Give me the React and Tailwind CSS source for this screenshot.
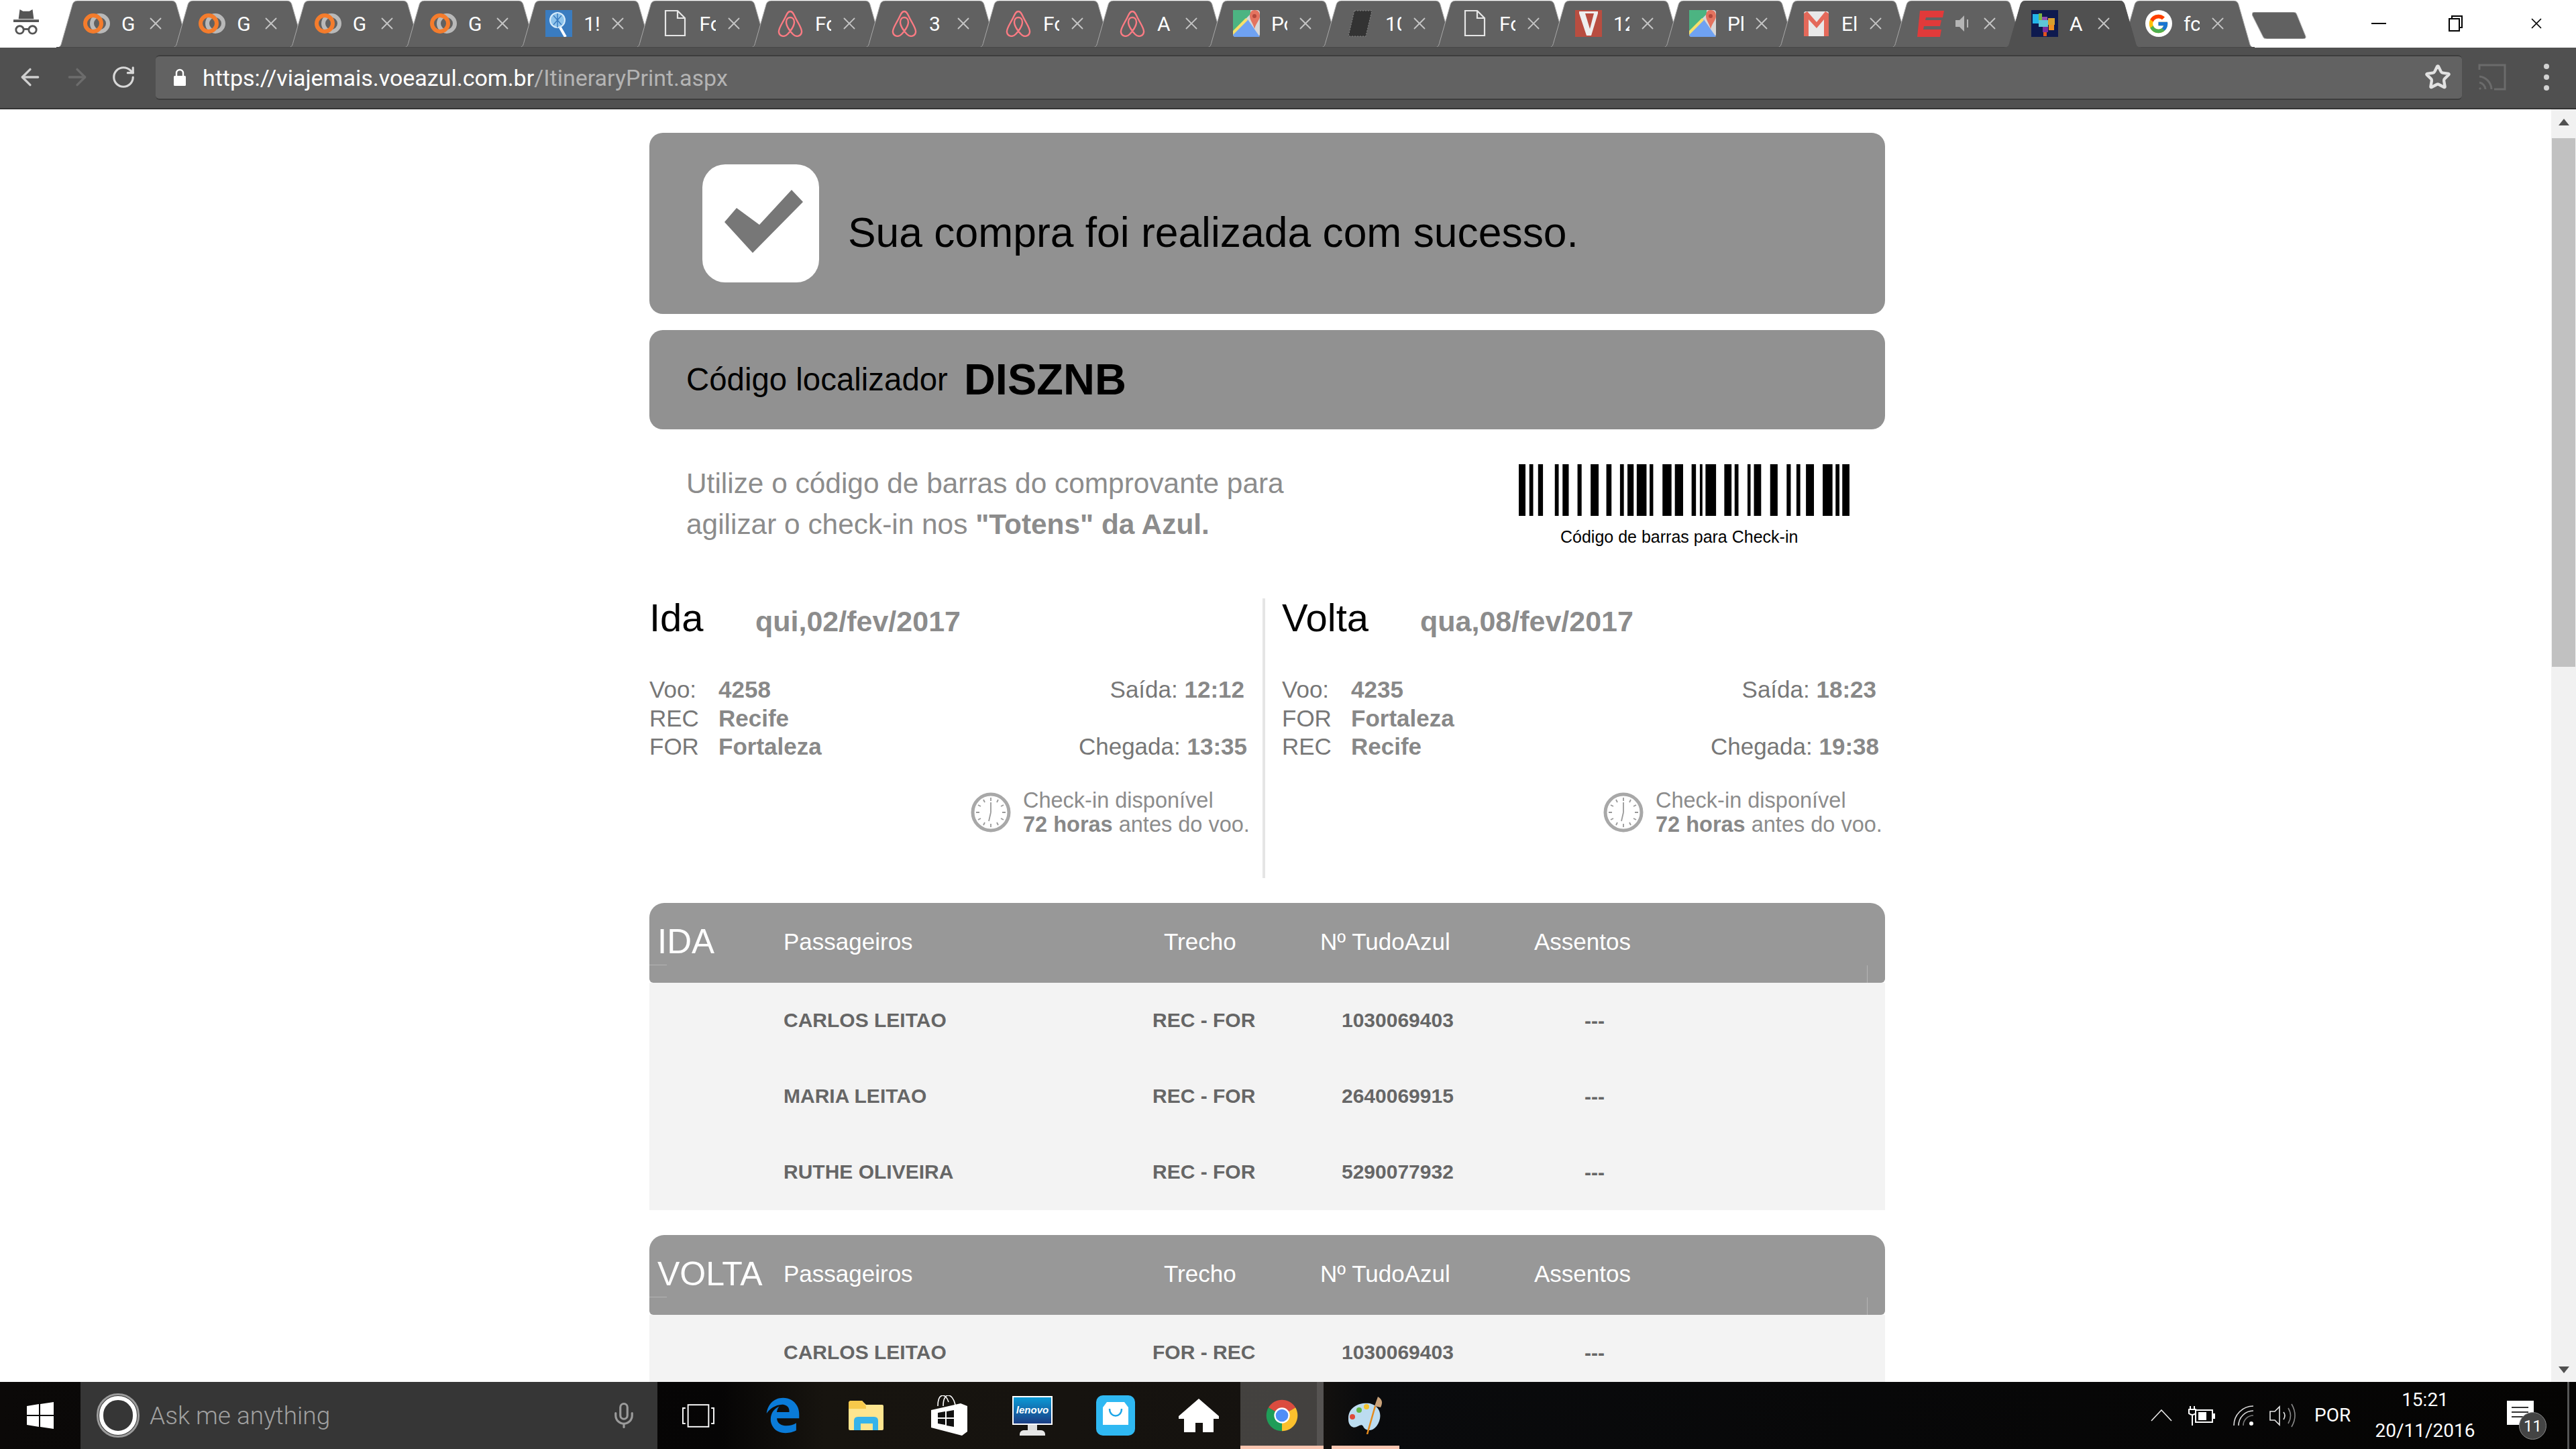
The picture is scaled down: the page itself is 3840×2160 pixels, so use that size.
import { ArrowLeft, ArrowRight, RotateCw, Star, X, Mic } from 'lucide-react';
import { FcGoogle } from 'react-icons/fc';
import { FaEdgeLegacy } from 'react-icons/fa6';

const BARS = [
  [92, 118], [133, 148], [167, 186], [232, 247], [262, 286], [320, 336], [371, 402], [432, 452], [485, 500], [514, 538],
  [550, 588], [600, 614], [650, 685], [698, 730], [763, 780], [795, 805], [817, 858], [890, 918], [930, 945], [980, 992],
  [1005, 1033], [1068, 1097], [1132, 1148], [1170, 1185], [1207, 1238], [1272, 1310], [1322, 1337], [1348, 1376],
];

const TABS = [
  { icon: 'rings', title: 'G' },
  { icon: 'rings', title: 'G' },
  { icon: 'rings', title: 'G' },
  { icon: 'rings', title: 'G' },
  { icon: 'search', title: '1!' },
  { icon: 'doc', title: 'Fo' },
  { icon: 'airbnb', title: 'Fo' },
  { icon: 'airbnb', title: '3' },
  { icon: 'airbnb', title: 'Fo' },
  { icon: 'airbnb', title: 'A' },
  { icon: 'maps', title: 'Po' },
  { icon: 'slash', title: '10' },
  { icon: 'doc', title: 'Fo' },
  { icon: 'vogue', title: '12' },
  { icon: 'maps', title: 'Pl' },
  { icon: 'gmail', title: 'El' },
  { icon: 'espn', title: '', sound: true },
  { icon: 'brazil', title: 'A', active: true },
  { icon: 'google', title: 'fc' },
];

function Favicon({ kind }) {
  if (kind === 'google') {
    return (
      <div className="w-[40px] h-[40px] rounded-full bg-white flex items-center justify-center">
        <FcGoogle size={33} />
      </div>
    );
  }
  const shapes = {
    rings: (
      <>
        <circle cx="25" cy="20" r="12" fill="none" stroke="#b9b9b9" strokeWidth="6" />
        <circle cx="15" cy="20" r="12" fill="none" stroke="#f47c2c" strokeWidth="6" />
      </>
    ),
    search: (
      <>
        <rect width="40" height="40" fill="#3a7cc0" />
        <circle cx="18" cy="15" r="11" fill="#8fc4ec" stroke="#d8ecfa" strokeWidth="2" />
        <path d="M12 8 L24 22 M24 8 L12 22 M18 5 L18 26" stroke="#3a7cc0" strokeWidth="1.5" />
        <path d="M22 26 L30 40" stroke="#fff" strokeWidth="4" />
      </>
    ),
    doc: <path d="M6 1 H24 L35 12 V38 H6 Z M24 1 V12 H35" fill="none" stroke="#e6e6e6" strokeWidth="2.2" />,
    airbnb: (
      <path
        d="M20 2 C24 2 25 6 28 12 C32 20 38 28 37 33 C36 39 29 41 24 36 C20 32 14 24 14 18 C14 13 17 11 20 11 C23 11 26 13 26 18 C26 24 20 32 16 36 C11 41 4 39 3 33 C2 28 8 20 12 12 C15 6 16 2 20 2 Z"
        fill="none"
        stroke="#fb7b83"
        strokeWidth="2.4"
      />
    ),
    maps: (
      <>
        <rect width="40" height="40" rx="4" fill="#d8d8d8" />
        <path d="M0 0 H26 V6 L0 32 Z" fill="#4cb482" />
        <path d="M0 32 L22 14 L40 40 H4 Q0 40 0 36 Z" fill="#6fa2f2" />
        <path d="M0 31 L19 12 L22 15 L0 37 Z" fill="#f7e06a" />
        <path d="M32 0 C38 0 40 4 40 9 C40 15 34 20 32 28 C30 20 25 15 25 9 C25 4 27 0 32 0 Z" fill="#e4735f" />
        <circle cx="32" cy="9" r="3" fill="#b3483c" />
      </>
    ),
    slash: <path d="M11 1 H37 L28 39 H2 Z" fill="#333" stroke="#888" strokeDasharray="2 2" />,
    vogue: (
      <>
        <rect width="40" height="40" fill="#b94d40" />
        <path d="M6 2 H34 V5 L24 38 H17 L6 5 Z" fill="#eee" />
        <path d="M15 5 L22 28 L28 5 Z" fill="#b94d40" />
      </>
    ),
    gmail: (
      <>
        <rect x="1" y="2" width="37" height="37" rx="3" fill="#e8e8e8" />
        <path d="M1 5 L6 2 L20 18 L33 2 L38 5 V39 H31 V14 L20 27 L8 14 V39 H1 Z" fill="#e4695a" />
      </>
    ),
    espn: <path d="M4 1 H40 L38 11 H13 L12 15 H36 L34 24 H10 L9 29 H36 L34 40 H0 Z" fill="#e13a3a" />,
    brazil: (
      <>
        <rect width="40" height="40" fill="#0e1a4f" />
        <rect x="2" y="6" width="9" height="14" fill="#23b5e8" />
        <rect x="11" y="5" width="5" height="10" fill="#7bb842" />
        <rect x="16" y="10" width="8" height="8" fill="#8e4fb0" />
        <rect x="25" y="12" width="10" height="10" fill="#d8a02e" />
        <rect x="11" y="15" width="14" height="10" fill="#5fc6d6" />
        <rect x="26" y="22" width="8" height="8" fill="#f09020" />
        <rect x="17" y="25" width="8" height="8" fill="#7a2c9c" />
        <rect x="18" y="33" width="5" height="6" fill="#e2521e" />
      </>
    ),
  };
  return (
    <svg viewBox="0 0 40 40" className="w-[40px] h-[40px]">
      {shapes[kind]}
    </svg>
  );
}

function Tab({ tab, index }) {
  // the first seven tabs sit a little wider apart than the rest
  const overlap = index === 0 ? '' : index < 7 ? '-ml-[30.7px]' : '-ml-[33px]';
  return (
    <div className={`relative h-[70px] w-[203px] shrink-0 flex items-center pl-[40px] ${overlap} ${tab.active ? 'z-10' : ''}`}>
      <svg viewBox="0 0 203 70" className="absolute inset-0 w-full h-full">
        <path d="M0 70 C6 70 7 66 8 62 L24 6 C25 2 28 0 33 0 H171 C175 0 178 2 179 6 L195 62 C196 66 197 70 203 70 Z" fill={tab.active ? '#505050' : '#616161'} stroke={tab.active ? '#505050' : '#a9a9a9'} strokeWidth="1" />
        {!tab.active && <path d="M0 69.5 H203" stroke="#474747" strokeWidth="1" />}
      </svg>
      <div className="relative flex items-center h-full pb-[2px]">
        <Favicon kind={tab.icon} />
        <div className="ml-[17px] w-[24px] overflow-hidden whitespace-nowrap text-[30px] text-white font-['Roboto',sans-serif]">
          {tab.sound ? (
            <svg viewBox="0 0 24 30" className="w-[24px] h-[30px]">
              <path d="M0 10 H6 L13 3 V27 L6 20 H0 Z" fill="#b5b5b5" />
              <path d="M18 9 V21" stroke="#b5b5b5" strokeWidth="2" />
            </svg>
          ) : (
            tab.title
          )}
        </div>
        <X className="ml-[12px] text-[#c4c4c4]" size={30} strokeWidth={1.5} />
      </div>
    </div>
  );
}

function TabStrip() {
  return (
    <div className="h-[71px] pt-[1px] bg-white flex items-start shrink-0">
      <div className="w-[84px] shrink-0 pl-[20px] pt-[12px]">
        <svg viewBox="0 0 40 42" className="w-[38px] h-[40px]">
          <path d="M8 16 L10 1 L15 4 H25 L30 1 L32 16 Z" fill="#555" />
          <rect x="0" y="17" width="40" height="4" fill="#555" />
          <circle cx="10" cy="33" r="6" fill="none" stroke="#555" strokeWidth="3" />
          <circle cx="30" cy="33" r="6" fill="none" stroke="#555" strokeWidth="3" />
          <path d="M16 32 H24" stroke="#555" strokeWidth="3" />
        </svg>
      </div>
      {TABS.map((tab, i) => (
        <Tab key={i} tab={tab} index={i} />
      ))}
      <div className="-ml-[4px] mt-[17px] w-[84px] h-[40px] shrink-0">
        <svg viewBox="0 0 84 40" className="w-full h-full">
          <path d="M3 0 H62 Q66 0 67 4 L80 36 Q81 40 76 40 H22 Q17 40 16 36 L0 4 Q0 0 3 0 Z" fill="#616161" stroke="#bbb" strokeWidth="1" />
        </svg>
      </div>
      <div className="flex-1 flex items-center justify-end h-[68px] text-black">
        <div className="w-[22px] h-[2px] bg-black mr-[93px]" />
        <svg viewBox="0 0 22 24" className="w-[22px] h-[24px] mr-[96px]">
          <path d="M5 5 V1 H20 V18 H16" fill="none" stroke="#000" strokeWidth="2" />
          <rect x="1" y="5" width="15" height="18" fill="none" stroke="#000" strokeWidth="2" />
        </svg>
        <X className="mr-[46px]" size={26} strokeWidth={1.6} />
      </div>
    </div>
  );
}

function Toolbar() {
  return (
    <div className="h-[92px] bg-[#505050] border-b-[2px] border-[#333] flex items-center shrink-0 pb-[2px]">
      <div className="w-[232px] shrink-0 flex items-center pl-[25px]">
        <ArrowLeft className="text-[#d0d0d0]" size={40} strokeWidth={2} />
        <ArrowRight className="text-[#6c6c6c] ml-[30px]" size={40} strokeWidth={2} />
        <RotateCw className="text-[#d8d8d8] ml-[30px]" size={38} strokeWidth={2} />
      </div>
      <div className="w-[3438px] h-[67px] bg-[#626262] border-y-[2px] border-[#3d3d3d] rounded-[6px] flex items-center shrink-0">
        <svg viewBox="0 0 20 26" className="w-[20px] h-[26px] ml-[26px]">
          <path d="M5 11 V7 a5 5 0 0 1 10 0 V11" fill="none" stroke="#fff" strokeWidth="2.4" />
          <rect x="1" y="11" width="18" height="15" rx="1.5" fill="#fff" />
        </svg>
        <div className="ml-[24px] pt-[3px] text-[34px] text-white font-['Roboto',sans-serif]">
          https://viajemais.voeazul.com.br<span className="text-[#b4b4b4]">/ItineraryPrint.aspx</span>
        </div>
        <Star className="ml-auto mr-[16px] text-[#e2e2e2]" size={40} strokeWidth={2.6} />
      </div>
      <svg viewBox="0 0 42 42" className="w-[42px] h-[42px] ml-[24px]">
        <path d="M2 10 V3 H40 V39 H24 M2 20 a20 20 0 0 1 18 19 M2 29 a11 11 0 0 1 9 10 M2 37 L4 39" fill="none" stroke="#6b6b6b" strokeWidth="3" />
      </svg>
      <div className="ml-[56px] flex flex-col gap-[8px]">
        <div className="w-[8px] h-[8px] rounded-full bg-[#d2d2d2]" />
        <div className="w-[8px] h-[8px] rounded-full bg-[#d2d2d2]" />
        <div className="w-[8px] h-[8px] rounded-full bg-[#d2d2d2]" />
      </div>
    </div>
  );
}

function ClockIcon() {
  return (
    <svg viewBox="0 0 60 60" className="w-[60px] h-[60px] shrink-0">
      <circle cx="30" cy="30" r="27" fill="none" stroke="#a8a8a8" strokeWidth="5" />
      <path d="M30 8 V13 M30 47 V52 M8 30 H13 M47 30 H52 M19 11 L21 15 M41 11 L39 15 M19 49 L21 45 M41 49 L39 45 M11 19 L15 21 M49 19 L45 21 M11 41 L15 39 M49 41 L45 39 M30 30 V15 M30 30 L27 43" stroke="#999" strokeWidth="1.8" />
    </svg>
  );
}

function Flight({ title, date, titleWidth, width, voo, from, fromName, to, toName, saida, chegada }) {
  return (
    <div className={`h-[417px] ${width}`}>
      <div className="flex items-baseline">
        <div className={`text-[58px] leading-[58px] text-black ${titleWidth}`}>{title}</div>
        <div className="text-[43px] leading-[58px] font-bold text-[#8c8c8c]">{date}</div>
      </div>
      <div className="mt-[52px] flex justify-between text-[35px] leading-[42.5px] text-[#777]">
        <div className="grid grid-cols-[103px_auto]">
          <span>Voo:</span><b className="text-[#888]">{voo}</b>
          <span>{from}</span><b className="text-[#888]">{fromName}</b>
          <span>{to}</span><b className="text-[#888]">{toName}</b>
        </div>
        <div className="flex flex-col justify-between text-right">
          <div className="pr-[4px]">Saída: <b className="text-[#888]">{saida}</b></div>
          <div>Chegada: <b className="text-[#888]">{chegada}</b></div>
        </div>
      </div>
      <div className="mt-[40px] pl-[479px] flex items-center gap-[18px]">
        <ClockIcon />
        <div className="text-[32.5px] leading-[36px] text-[#8c8c8c] whitespace-nowrap">
          Check-in disponível<br />
          <b className="text-[#888]">72 horas</b> antes do voo.
        </div>
      </div>
    </div>
  );
}

function PassengerTable({ label, labelSize, rows }) {
  return (
    <div className="mt-[37px]">
      <div className="relative h-[119px] pb-[2px] bg-[#989898] rounded-t-[22px] rounded-b-[6px] flex items-center text-white text-[35px]">
        <div className={`w-[200px] pl-[12px] ${labelSize}`}>{label}</div>
        <div className="w-[567px]">Passageiros</div>
        <div className="w-[233px]">Trecho</div>
        <div className="w-[319px]">Nº TudoAzul</div>
        <div>Assentos</div>
        <div className="absolute left-0 bottom-[26px] w-[26px] h-[1px] bg-[#b4b4b4]" />
        <div className="absolute right-[26px] bottom-0 w-[1px] h-[26px] bg-[#b4b4b4]" />
      </div>
      <div className="bg-[#f3f3f3]">
        {rows.map((r, i) => (
          <div key={i} className="h-[113px] pb-[2px] flex items-center text-[30px] font-bold text-[#666]">
            <div className="w-[200px]" />
            <div className="w-[550px]">{r.name}</div>
            <div className="w-[282px]">{r.leg}</div>
            <div className="w-[362px]">{r.num}</div>
            <div className="pt-[2px]">---</div>
          </div>
        ))}
      </div>
    </div>
  );
}

function Page() {
  return (
    <div className="flex-1 min-w-0 overflow-hidden pl-[968px] bg-white font-['Liberation_Sans',Arial,sans-serif]">
      <div className="w-[1842px] pt-[35px]">
        <div className="h-[270px] bg-[#919191] rounded-[20px] flex items-center pl-[79px]">
          <div className="w-[174px] h-[176px] bg-white rounded-[34px] shrink-0">
            <svg viewBox="0 0 174 176" className="w-full h-full">
              <path d="M33 86 L51 65 L85 90 L133 38 L150 56 L75 132 Z" fill="#777" />
            </svg>
          </div>
          <div className="ml-[43px] pt-[28px] text-[62.4px] text-black whitespace-nowrap">Sua compra foi realizada com sucesso.</div>
        </div>

        <div className="mt-[24px] h-[148px] bg-[#919191] rounded-[20px] flex items-center pl-[55px] text-black">
          <span className="text-[47.4px]">Código localizador</span>
          <b className="ml-[24px] text-[65px]">DISZNB</b>
        </div>

        <div className="h-[252px] flex">
          <div className="w-[1296px] pl-[55px] pt-[50px] text-[42.4px] leading-[61px] text-[#8c8c8c]">
            Utilize o código de barras do comprovante para<br />
            agilizar o check-in nos <b>"Totens" da Azul.</b>
          </div>
          <div className="pt-[52px]">
            <svg viewBox="92 0 1284 10" preserveAspectRatio="none" className="w-[493px] h-[77px]">
              {BARS.map(([a, b]) => (
                <rect key={a} x={a} y="0" width={b - a} height="10" fill="#000" />
              ))}
            </svg>
            <div className="mt-[16px] pl-[62px] text-[25px] leading-[30px] text-black whitespace-nowrap">Código de barras para Check-in</div>
          </div>
        </div>

        <div className="flex">
          <div className="w-[914px]">
            <Flight title="Ida" date="qui,02/fev/2017" titleWidth="w-[158px]" width="w-[891px]" voo="4258" from="REC" fromName="Recife" to="FOR" toName="Fortaleza" saida="12:12" chegada="13:35" />
          </div>
          <div className="w-[4px] h-[417px] bg-[#e5e5e5] shrink-0" />
          <div className="pl-[25px] flex-1">
            <Flight title="Volta" date="qua,08/fev/2017" titleWidth="w-[206px]" width="w-[890px]" voo="4235" from="FOR" fromName="Fortaleza" to="REC" toName="Recife" saida="18:23" chegada="19:38" />
          </div>
        </div>

        <PassengerTable
          label="IDA"
          labelSize="text-[51px]"
          rows={[
            { name: 'CARLOS LEITAO', leg: 'REC - FOR', num: '1030069403' },
            { name: 'MARIA LEITAO', leg: 'REC - FOR', num: '2640069915' },
            { name: 'RUTHE OLIVEIRA', leg: 'REC - FOR', num: '5290077932' },
          ]}
        />
        <PassengerTable
          label="VOLTA"
          labelSize="text-[50px]"
          rows={[{ name: 'CARLOS LEITAO', leg: 'FOR - REC', num: '1030069403' }]}
        />
      </div>
    </div>
  );
}

function Scrollbar() {
  return (
    <div className="w-[37px] shrink-0 bg-[#f1f1f1] flex flex-col">
      <div className="h-[37px] flex items-center justify-center">
        <svg viewBox="0 0 16 10" className="w-[16px] h-[10px]"><path d="M8 0 L16 10 H0 Z" fill="#505050" /></svg>
      </div>
      <div className="mt-[6px] mx-[1px] h-[788px] bg-[#c1c1c1]" />
      <div className="mt-auto h-[37px] flex items-center justify-center">
        <svg viewBox="0 0 16 10" className="w-[16px] h-[10px]"><path d="M0 0 H16 L8 10 Z" fill="#505050" /></svg>
      </div>
    </div>
  );
}

function TaskbarApps() {
  const slot = 'relative w-[124px] h-full flex items-center justify-center';
  return (
    <>
      <div className={slot}>
        <FaEdgeLegacy className="text-[#0a7bd8]" size={54} />
      </div>
      <div className={slot}>
        <svg viewBox="0 0 52 44" className="w-[52px] h-[44px]">
          <path d="M0 4 Q0 0 4 0 H20 L26 6 H50 Q52 6 52 8 V42 Q52 44 50 44 H2 Q0 44 0 42 Z" fill="#fde58f" />
          <path d="M0 4 Q0 0 4 0 H20 L26 8 V12 H0 Z" fill="#f7c94b" />
          <path d="M8 44 V30 Q8 24 14 24 H38 Q44 24 44 30 V44 H36 V34 H18 V44 Z" fill="#36b3ea" />
        </svg>
      </div>
      <div className={slot}>
        <svg viewBox="0 0 54 60" className="w-[54px] h-[60px]">
          <path d="M10 16 C10 -4 22 -4 26 10 M18 16 C18 -6 32 -4 36 14" fill="none" stroke="#fff" strokeWidth="1.6" />
          <path d="M0 22 L44 12 L54 16 V54 L46 60 L0 48 Z" fill="#fff" />
          <path d="M10 26 L21 24 V33 H10 Z M23 24 L34 22 V33 H23 Z M10 35 H21 V44 L10 42 Z M23 35 H34 V47 L23 45 Z" fill="#111" />
        </svg>
      </div>
      <div className={slot}>
        <div className="w-[60px] flex flex-col items-center">
          <div className="w-[60px] h-[43px] bg-[linear-gradient(180deg,#0a9ad6,#1b3d84)] border-[2px] border-white flex items-center justify-center text-[15px] italic font-bold text-white font-['Liberation_Sans',sans-serif]">
            lenovo
          </div>
          <div className="w-[14px] h-[8px] bg-[#ddd]" />
          <div className="w-[38px] h-[8px] bg-[#e6e6e6] rounded-t-[6px]" />
        </div>
      </div>
      <div className={slot}>
        <svg viewBox="0 0 58 60" className="w-[58px] h-[60px]">
          <rect width="58" height="60" rx="10" fill="#2fb8f2" />
          <path d="M10 18 L16 10 H42 L48 18 V44 H10 Z" fill="#fff" />
          <path d="M20 20 C20 34 38 34 38 20" fill="none" stroke="#1ea6e8" strokeWidth="2.4" />
        </svg>
      </div>
      <div className={slot}>
        <svg viewBox="0 0 60 50" className="w-[60px] h-[50px]">
          <path d="M30 0 L60 26 V30 H52 V50 H36 V36 H25 V50 H8 V30 H0 V26 Z" fill="#fff" />
        </svg>
      </div>
      <div className={`${slot} bg-white/20 border-r-[10px] border-white/10 pl-[10px]`}>
        <svg viewBox="0 0 48 48" className="w-[56px] h-[56px]">
          <path d="M24 24 L6.7 14 A20 20 0 0 1 41.3 14 Z" fill="#db4c3f" />
          <path d="M24 24 L41.3 14 A20 20 0 0 1 24 44 Z" fill="#fbc02d" />
          <path d="M24 24 L24 44 A20 20 0 0 1 6.7 14 Z" fill="#1f9d58" />
          <circle cx="24" cy="24" r="10" fill="#fff" />
          <circle cx="24" cy="24" r="8" fill="#4f8ef7" />
        </svg>
        <div className="absolute left-0 right-[-10px] bottom-0 h-[5px] bg-[#f9c5b0]" />
      </div>
      <div className={slot}>
        <svg viewBox="0 0 54 56" className="w-[54px] h-[56px]">
          <path d="M2 32 C2 16 18 8 34 10 C50 14 54 30 44 44 C36 54 26 50 24 44 C20 38 14 50 6 44 C2 40 2 36 2 32 Z" fill="#bcdcf0" />
          <circle cx="8" cy="30" r="4" fill="#df4a3a" />
          <circle cx="18" cy="20" r="4" fill="#64b445" />
          <circle cx="29" cy="15" r="4" fill="#f2c22e" />
          <path d="M30 56 L42 14" stroke="#e48a1c" strokeWidth="2.5" />
          <path d="M41 14 L46 0 C52 4 54 8 50 16 Z" fill="#c9a27a" />
        </svg>
        <div className="absolute left-[12px] right-[11px] bottom-0 h-[5px] bg-[#f9c5b0]" />
      </div>
    </>
  );
}

function Tray() {
  return (
    <div className="ml-auto flex items-center h-full text-white font-['Roboto',sans-serif]">
      <svg viewBox="0 0 32 18" className="w-[32px] h-[18px]">
        <path d="M1 17 L16 1 L31 17" fill="none" stroke="#e8e8e8" strokeWidth="1.6" />
      </svg>
      <svg viewBox="0 0 40 30" className="w-[40px] h-[30px] ml-[24px]">
        <path d="M3 1 V6 M9 1 V6 M1 6 H11 V12 Q6 16 1 12 Z M6 14 V30" stroke="#fff" strokeWidth="2" fill="none" />
        <rect x="11" y="7" width="25" height="18" fill="none" stroke="#fff" strokeWidth="2" />
        <rect x="15" y="10" width="12" height="12" fill="#fff" />
        <rect x="37" y="12" width="3" height="8" fill="#fff" />
      </svg>
      <svg viewBox="0 0 32 30" className="w-[32px] h-[30px] ml-[27px]">
        <path d="M1 30 A29 29 0 0 1 30 1 M8 30 A22 22 0 0 1 30 8" fill="none" stroke="#ddd" strokeWidth="1.6" />
        <path d="M15 30 A15 15 0 0 1 30 15" fill="none" stroke="#777" strokeWidth="1.6" />
        <circle cx="27" cy="27" r="3" fill="#fff" />
      </svg>
      <svg viewBox="0 0 40 36" className="w-[40px] h-[36px] ml-[22px]">
        <path d="M1 12 H8 L15 5 V32 L8 25 H1 Z" fill="none" stroke="#e8e8e8" strokeWidth="1.6" />
        <path d="M21 13 Q25 18 21 24" fill="none" stroke="#e8e8e8" strokeWidth="1.6" />
        <path d="M28 7 Q35 18 28 30 M33 1 Q43 18 33 35" fill="none" stroke="#888" strokeWidth="1.6" />
      </svg>
      <div className="ml-[27px] text-[28px] w-[57px]">POR</div>
      <div className="ml-[33px] w-[150px] text-center text-[28px] leading-[46px] whitespace-nowrap">
        <div>15:21</div>
        <div>20/11/2016</div>
      </div>
      <div className="relative ml-[47px] w-[40px] h-[36px] bg-white mb-[8px] mr-[50px] px-[7px] py-[9px] flex flex-col gap-[5px]">
        <div className="h-[2px] w-[25px] bg-[#333]" />
        <div className="h-[2px] w-[25px] bg-[#333]" />
        <div className="h-[2px] w-[25px] bg-[#333]" />
        <div className="absolute left-[18px] top-[17px] w-[41px] h-[41px] rounded-full bg-[#444] border-[1px] border-[#888] flex items-center justify-center text-[24px] text-white">11</div>
      </div>
      <div className="w-[3px] h-full bg-[#555] mr-[10px]" />
    </div>
  );
}

function Taskbar() {
  return (
    <div className="h-[100px] shrink-0 flex items-center bg-[linear-gradient(90deg,#0b0908_0%,#060505_28%,#17140f_32%,#15120f_51%,#0a0b0d_53%,#050403_100%)]">
      <div className="w-[120px] h-full flex items-center justify-center">
        <svg viewBox="0 0 40 40" className="w-[40px] h-[40px]">
          <path d="M0 6 L18 3 V19 H0 Z M20 3 L40 0 V19 H20 Z M0 21 H18 V37 L0 34 Z M20 21 H40 V40 L20 37 Z" fill="#fff" />
        </svg>
      </div>
      <div className="w-[860px] h-full bg-[#363636] flex items-center font-['Roboto',sans-serif]">
        <div className="ml-[24px] w-[64px] h-[66px] rounded-full border-[3px] border-[#9c9c9c] bg-transparent flex items-center justify-center">
          <div className="w-[56px] h-[58px] rounded-full border-[6px] border-white" />
        </div>
        <span className="ml-[15px] pt-[2px] text-[37px] font-light text-[#a0a0a0]">Ask me anything</span>
        <Mic className="ml-auto mr-[29px] text-[#9a9a9a]" size={42} strokeWidth={1.8} />
      </div>
      <div className="w-[122px] h-full flex items-center justify-center">
        <svg viewBox="0 0 50 36" className="w-[48px] h-[35px]">
          <rect x="9" y="1" width="32" height="34" fill="none" stroke="#fff" strokeWidth="2" />
          <path d="M5 6 H1 V30 H5 M45 6 H49 V30 H45" fill="none" stroke="#fff" strokeWidth="2" />
        </svg>
      </div>
      <div className="w-[3px] shrink-0" />
      <TaskbarApps />
      <Tray />
    </div>
  );
}

export default function App() {
  return (
    <div className="w-[3840px] h-[2160px] flex flex-col overflow-hidden">
      <TabStrip />
      <Toolbar />
      <div className="flex-1 min-h-0 flex">
        <Page />
        <Scrollbar />
      </div>
      <Taskbar />
    </div>
  );
}
